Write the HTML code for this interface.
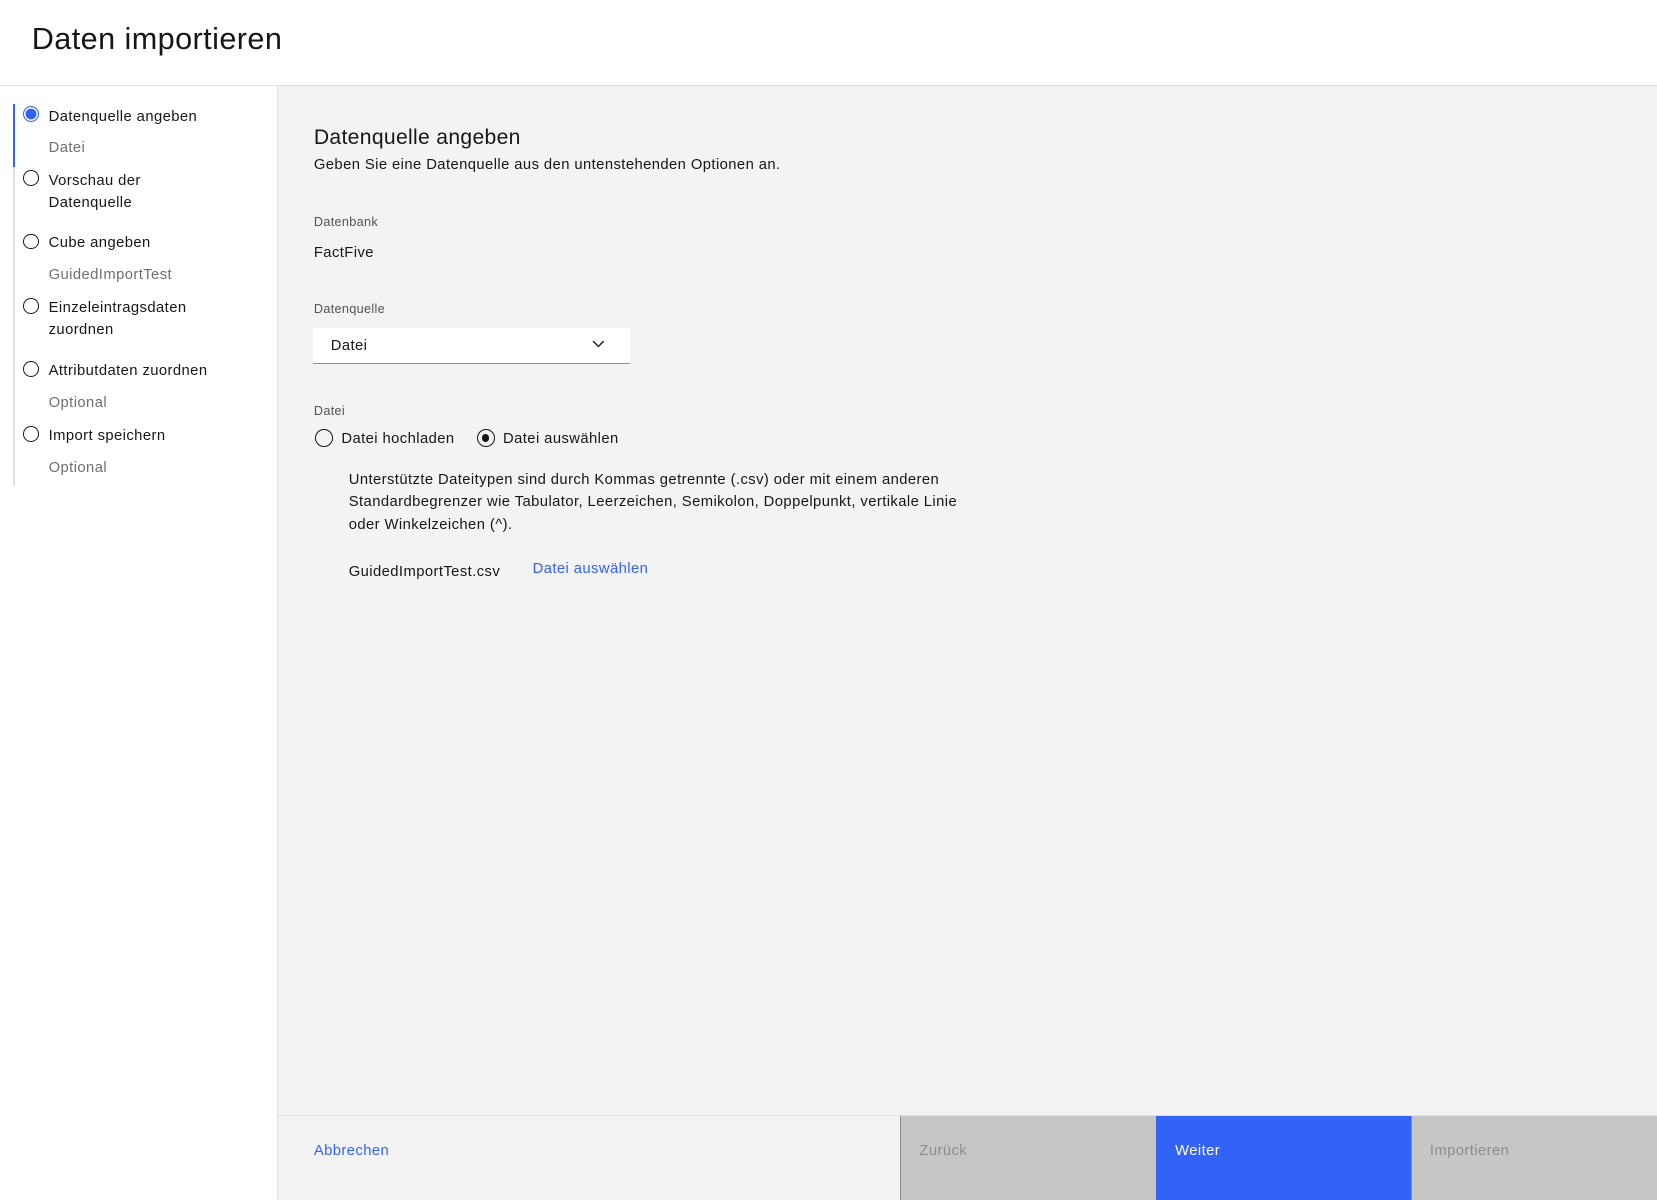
<!DOCTYPE html>
<html><head><meta charset="utf-8"><style>
*{box-sizing:border-box;margin:0;padding:0}
html,body{width:1657px;height:1200px;overflow:hidden;background:#fff}
#w{zoom:1.0568;width:1568px;height:1136px;position:relative;font-family:"Liberation Sans",sans-serif;color:#161616}
.a{position:absolute;white-space:nowrap}
.hdr{left:0;top:0;width:1568px;height:81px;border-bottom:1px solid #e0e0e0;background:#fff}
.side{left:0;top:81px;width:263px;height:1055px;background:#fff;border-right:1px solid #e0e0e0}
.main{left:263px;top:81px;width:1305px;height:1055px;background:#f3f3f3}
.s{font-size:14px;line-height:21px;letter-spacing:0.4px}
.g{color:#6f6f6f}
.r{width:15px;height:15px;border:1.5px solid #161616;border-radius:50%;position:absolute}
.lbl{font-size:12px;color:#525252;letter-spacing:0.3px}
</style></head><body><div id="w">
<div class="a hdr"></div>
<div class="a" style="left:30px;top:21px;font-size:29px;letter-spacing:0.4px">Daten importieren</div>
<div class="a side"></div>
<div class="a" style="left:12px;top:98px;width:2px;height:362px;background:#e0e0e0"></div>
<div class="a" style="left:12px;top:98px;width:2px;height:60px;background:#3362f7"></div>
<div class="r" style="left:22px;top:100px;border-color:#3362f7;background:#3362f7;box-shadow:inset 0 0 0 1.5px #fff"></div>
<div class="a s" style="left:46px;top:100px">Datenquelle angeben</div>
<div class="a s g" style="left:46px;top:130px">Datei</div>
<div class="r" style="left:22px;top:161px"></div>
<div class="a s" style="left:46px;top:161px">Vorschau der<br>Datenquelle</div>
<div class="r" style="left:22px;top:221px"></div>
<div class="a s" style="left:46px;top:220px">Cube angeben</div>
<div class="a s g" style="left:46px;top:250px">GuidedImportTest</div>
<div class="r" style="left:22px;top:282px"></div>
<div class="a s" style="left:46px;top:281px">Einzeleintragsdaten<br>zuordnen</div>
<div class="r" style="left:22px;top:342px"></div>
<div class="a s" style="left:46px;top:341px">Attributdaten zuordnen</div>
<div class="a s g" style="left:46px;top:371px">Optional</div>
<div class="r" style="left:22px;top:403px"></div>
<div class="a s" style="left:46px;top:402px">Import speichern</div>
<div class="a s g" style="left:46px;top:432px">Optional</div>
<div class="a main"></div>
<div class="a" style="left:297px;top:119px;font-size:20px;letter-spacing:0.3px">Datenquelle angeben</div>
<div class="a s" style="left:297px;top:146px">Geben Sie eine Datenquelle aus den untenstehenden Optionen an.</div>
<div class="a lbl" style="left:297px;top:203px">Datenbank</div>
<div class="a s" style="left:297px;top:229px">FactFive</div>
<div class="a lbl" style="left:297px;top:286px">Datenquelle</div>
<div class="a" style="left:296px;top:310px;width:300px;height:34px;background:#fff;border-bottom:1px solid #8d8d8d"></div>
<div class="a s" style="left:313px;top:317px">Datei</div>
<svg class="a" style="left:559px;top:320px" width="14" height="12" viewBox="0 0 14 12"><path d="M2 3l5 5 5-5" fill="none" stroke="#161616" stroke-width="1.3"/></svg>
<div class="a lbl" style="left:297px;top:382px">Datei</div>
<div class="r" style="left:298px;top:406px;width:17px;height:17px"></div>
<div class="a s" style="left:323px;top:405px">Datei hochladen</div>
<div class="r" style="left:451px;top:406px;width:17px;height:17px"></div>
<div class="a" style="left:456px;top:411px;width:7px;height:7px;border-radius:50%;background:#161616"></div>
<div class="a s" style="left:476px;top:405px">Datei auswählen</div>
<div class="a s" style="left:330px;top:444px">Unterstützte Dateitypen sind durch Kommas getrennte (.csv) oder mit einem anderen<br>Standardbegrenzer wie Tabulator, Leerzeichen, Semikolon, Doppelpunkt, vertikale Linie<br>oder Winkelzeichen (^).</div>
<div class="a s" style="left:330px;top:531px">GuidedImportTest.csv</div>
<div class="a s" style="left:504px;top:528px;color:#3362f7">Datei auswählen</div>
<div class="a" style="left:263px;top:1055px;width:1305px;height:1px;background:#e0e0e0"></div>
<div class="a s" style="left:297px;top:1079px;color:#3362f7">Abbrechen</div>
<div class="a" style="left:852px;top:1056px;width:242px;height:80px;background:#c6c6c6;border-left:1px solid #8d8d8d"></div>
<div class="a s" style="left:870px;top:1079px;color:#8d8d8d">Zurück</div>
<div class="a" style="left:1094px;top:1056px;width:241px;height:80px;background:#3362f7"></div>
<div class="a s" style="left:1112px;top:1079px;color:#fff">Weiter</div>
<div class="a" style="left:1335px;top:1056px;width:233px;height:80px;background:#c6c6c6;border-left:1px solid #8d8d8d"></div>
<div class="a s" style="left:1353px;top:1079px;color:#8d8d8d">Importieren</div>
</div></body></html>
